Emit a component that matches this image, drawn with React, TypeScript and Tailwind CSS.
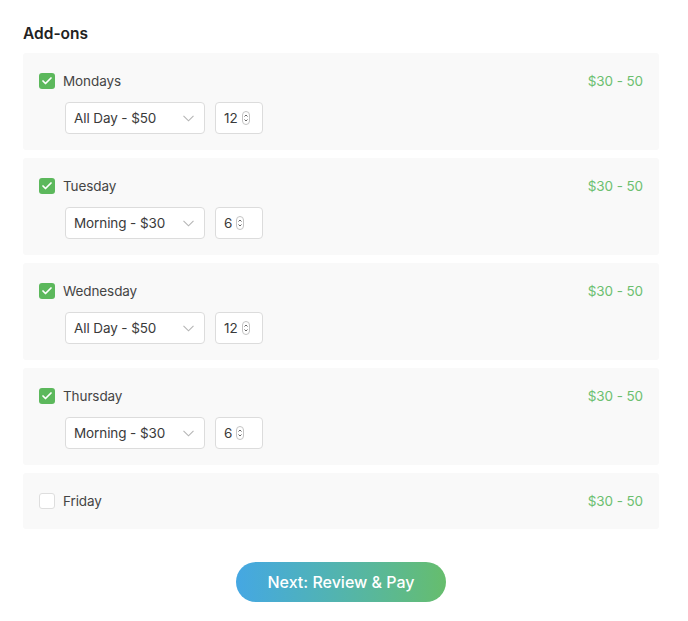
import { Check } from "lucide-react";

type Addon = {
  day: string;
  checked: boolean;
  option?: string;
  qty?: number;
};

const addons: Addon[] = [
  { day: "Mondays", checked: true, option: "All Day - $50", qty: 12 },
  { day: "Tuesday", checked: true, option: "Morning - $30", qty: 6 },
  { day: "Wednesday", checked: true, option: "All Day - $50", qty: 12 },
  { day: "Thursday", checked: true, option: "Morning - $30", qty: 6 },
  { day: "Friday", checked: false },
];

function Spinner() {
  return (
    <svg width="8" height="14" viewBox="0 0 8 14" className="shrink-0">
      <rect x="0.5" y="0.5" width="7" height="13" rx="3.5" fill="#fff" stroke="#c4c4c4" />
      <path d="M2.5 5.5 L4 4 L5.5 5.5" fill="none" stroke="#555" strokeWidth="0.9" />
      <path d="M2.5 8.5 L4 10 L5.5 8.5" fill="none" stroke="#555" strokeWidth="0.9" />
    </svg>
  );
}

function Chevron() {
  return (
    <svg width="11" height="7" viewBox="0 0 11 7" className="shrink-0">
      <path d="M0.5 0.8 L5.5 5.8 L10.5 0.8" fill="none" stroke="#b5b5b5" strokeWidth="1.1" />
    </svg>
  );
}

export default function App() {
  return (
    <div className="min-h-screen bg-white pl-[23px] pr-[29px] pt-[24px] font-['Inter',sans-serif]">
      <h2 className="text-[15.5px] font-semibold leading-5 text-[#222]">Add-ons</h2>

      <div className="mt-[9px] flex flex-col gap-2">
        {addons.map((a) => (
          <div key={a.day} className="rounded-[3px] bg-[#f9f9f9] px-4 py-4">
            <div className="flex h-6 items-center justify-between">
              <div className="flex items-center gap-2">
                {a.checked ? (
                  <span className="flex size-4 items-center justify-center rounded-[3px] bg-[#5cb85c]">
                    <Check className="size-3 text-white" strokeWidth={3.5} />
                  </span>
                ) : (
                  <span className="size-4 rounded-[3px] border border-[#dedede] bg-white" />
                )}
                <span className="text-[13.5px] tracking-[-0.1px] text-[#454545]">{a.day}</span>
              </div>
              <span className="text-[13.5px] tracking-[-0.1px] text-[#6cbf70]">$30 - 50</span>
            </div>

            {a.option && (
              <div className="ml-[26px] mt-[9px] flex gap-[10px]">
                <div className="flex h-8 w-[140px] items-center justify-between rounded-[4px] border border-[#dcdcdc] bg-white pl-[8px] pr-[10px]">
                  <span className="text-[13.5px] tracking-[-0.1px] text-[#3a3a3a]">{a.option}</span>
                  <Chevron />
                </div>
                <div className="flex h-8 w-12 items-center gap-[4px] rounded-[4px] border border-[#dcdcdc] bg-white pl-[8px]">
                  <span className="text-[13.5px] text-[#3a3a3a]">{a.qty}</span>
                  <Spinner />
                </div>
              </div>
            )}
          </div>
        ))}
      </div>

      <div className="mt-[33px] flex justify-center">
        <button className="h-10 w-[210px] rounded-full bg-gradient-to-r from-[#45a7e3] to-[#66bd6c] text-[16px] font-medium text-white">
          Next: Review &amp; Pay
        </button>
      </div>
    </div>
  );
}
